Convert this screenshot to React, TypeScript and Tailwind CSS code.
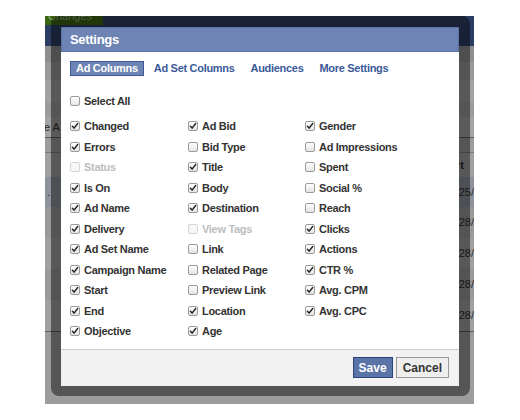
import React from "react";

type State = 0 | 1 | 2; // 0 off, 1 checked, 2 disabled

const COLUMNS: [string, State][][] = [
  [
    ["Changed", 1],
    ["Errors", 1],
    ["Status", 2],
    ["Is On", 1],
    ["Ad Name", 1],
    ["Delivery", 1],
    ["Ad Set Name", 1],
    ["Campaign Name", 1],
    ["Start", 1],
    ["End", 1],
    ["Objective", 1],
  ],
  [
    ["Ad Bid", 1],
    ["Bid Type", 0],
    ["Title", 1],
    ["Body", 1],
    ["Destination", 1],
    ["View Tags", 2],
    ["Link", 0],
    ["Related Page", 0],
    ["Preview Link", 0],
    ["Location", 1],
    ["Age", 1],
  ],
  [
    ["Gender", 1],
    ["Ad Impressions", 0],
    ["Spent", 0],
    ["Social %", 0],
    ["Reach", 0],
    ["Clicks", 1],
    ["Actions", 1],
    ["CTR %", 1],
    ["Avg. CPM", 1],
    ["Avg. CPC", 1],
  ],
];

const COL_WIDTHS = ["w-[118px]", "w-[117px]", "flex-1"];

function Box({ state }: { state: State }) {
  const disabled = state === 2;
  return (
    <span
      className={
        "flex h-[10px] w-[10px] shrink-0 items-center justify-center rounded-[2px] border " +
        (disabled
          ? "border-[#d6d6d6] bg-[#f7f7f7]"
          : "border-[#9a9a9a] bg-gradient-to-b from-white to-[#e4e4e4]")
      }
    >
      {state === 1 ? (
        <svg width="8" height="8" viewBox="0 0 8 8">
          <path
            d="M1.4 4.2 L3.1 6.1 L6.7 1.5"
            fill="none"
            stroke="#262626"
            strokeWidth="1.5"
            strokeLinecap="round"
            strokeLinejoin="round"
          />
        </svg>
      ) : null}
    </span>
  );
}

function Option({ label, state }: { label: string; state: State }) {
  return (
    <div className="flex h-[20.5px] items-center gap-[4px]">
      <Box state={state} />
      <span
        className={
          "whitespace-nowrap text-[11px] font-bold tracking-[-0.3px] " +
          (state === 2 ? "text-[#bdbdbd]" : "text-[#333]")
        }
      >
        {label}
      </span>
    </div>
  );
}

function Backdrop() {
  return (
    <div className="flex h-[388px] w-[429px] flex-col overflow-hidden bg-[#9c9c9c] text-[11px] font-bold text-[#2a2a2a]">
      <div className="relative h-[30px] shrink-0 bg-[#2c3d62]">
        <div className="absolute -top-[4px] left-0 flex h-[13px] w-[58px] items-end overflow-hidden bg-[#3a6512] pl-[3px] text-[11px] leading-[17px] font-normal text-[#8fa87c]">
          Changes
        </div>
      </div>
      <div className="h-[16px] shrink-0 bg-[#8e8e8e]" />
      <div className="h-[18px] shrink-0 bg-[#9a9a9a]" />
      <div className="h-[22px] shrink-0 bg-[#a2a2a2]" />
      <div className="h-[15px] shrink-0 bg-[#9b9b9b]" />
      <div className="flex h-[21px] shrink-0 items-center border-b border-[#5c5c5c] bg-[#a4a4a4] font-normal">
        <span className="-ml-[1px]">e A</span>
      </div>
      <div className="h-[15px] shrink-0 border-b border-[#7a7a7a] bg-[#9c9c9c]" />
      <div className="flex h-[24px] shrink-0 items-center justify-end bg-[#a0a0a0] pr-[10px]">
        Start
      </div>
      <div className="flex h-[30px] shrink-0 items-center bg-[#8d929c] font-normal">
        <span className="pl-[2px]">.</span>
        <span className="ml-auto">25/</span>
      </div>
      {["#9a9a9a", "#a0a0a0", "#9a9a9a", "#a0a0a0"].map((c, i) => (
        <div
          key={i}
          className="flex h-[31px] shrink-0 items-center justify-end font-normal"
          style={{ backgroundColor: c }}
        >
          <span>28/</span>
        </div>
      ))}
      <div className="flex-1 border-t border-[#5c5c5c] bg-[#9c9c9c]" />
    </div>
  );
}

export default function App() {
  return (
    <div className="h-[420px] w-[520px] overflow-hidden bg-white pt-[16px] pl-[45px] font-['Liberation_Sans',Arial,sans-serif]">
      <div className="relative w-[429px]">
        <Backdrop />

        <div className="absolute top-0 left-[6px] flex h-[380px] w-[419px] flex-col rounded-[8px] bg-black/45 pt-[11px] pr-[11px] pb-[10px] pl-[10px]">
          <div className="flex flex-1 flex-col bg-white">
            <div className="flex h-[25px] shrink-0 items-center border border-[#5a73a6] bg-[#6d84b4] pl-[8px] text-[13px] font-bold tracking-[-0.3px] text-white">
              Settings
            </div>

            <div className="flex flex-1 flex-col px-[9px] pt-[9px]">
              <div className="flex h-[15px] items-center gap-[4px] text-[11px] font-bold tracking-[-0.3px]">
                <span className="flex h-[15px] items-center border border-[#3b5998] bg-[#6d84b4] pr-[5px] pl-[5px] text-white">
                  Ad Columns
                </span>
                {["Ad Set Columns", "Audiences", "More Settings"].map((t) => (
                  <span key={t} className="px-[6px] text-[#3b5998]">
                    {t}
                  </span>
                ))}
              </div>

              <div className="mt-[15px] flex h-[20px] items-center gap-[4px]">
                <Box state={0} />
                <span className="text-[11px] font-bold tracking-[-0.3px] text-[#333]">
                  Select All
                </span>
              </div>

              <div className="mt-[5px] flex">
                {COLUMNS.map((col, ci) => (
                  <div key={ci} className={"flex flex-col " + COL_WIDTHS[ci]}>
                    {col.map(([label, state]) => (
                      <Option key={label} label={label} state={state} />
                    ))}
                  </div>
                ))}
              </div>
            </div>

            <div className="flex h-[37px] shrink-0 items-start justify-end gap-[3px] border-t border-[#cccccc] bg-[#f2f2f2] pt-[7px] pr-[10px]">
              <button className="flex h-[21px] items-center border border-[#29447e] bg-[#5b74a8] px-[5px] text-[12px] font-bold text-white">
                Save
              </button>
              <button className="flex h-[21px] items-center border border-[#999] bg-[#eeeeee] px-[6px] text-[12px] font-bold text-[#333]">
                Cancel
              </button>
            </div>
          </div>
        </div>
      </div>
    </div>
  );
}
